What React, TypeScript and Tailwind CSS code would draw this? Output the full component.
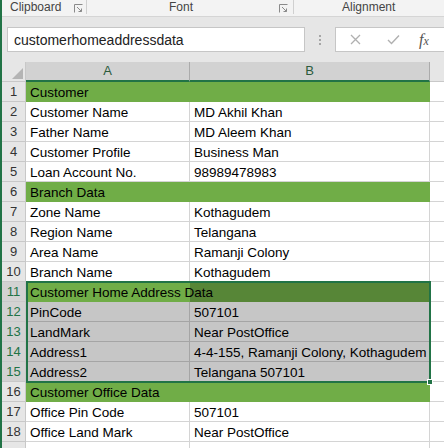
type SheetRow = {
  n: number;
  a?: string;
  b?: string;
  head?: boolean;
  sel?: boolean;
  hideNum?: boolean;
};

const rows: SheetRow[] = [
  { n: 1, a: "Customer", head: true },
  { n: 2, a: "Customer Name", b: "MD Akhil Khan" },
  { n: 3, a: "Father Name", b: "MD Aleem Khan" },
  { n: 4, a: "Customer Profile", b: "Business Man" },
  { n: 5, a: "Loan Account No.", b: "98989478983" },
  { n: 6, a: "Branch Data", head: true },
  { n: 7, a: "Zone Name", b: "Kothagudem" },
  { n: 8, a: "Region Name", b: "Telangana" },
  { n: 9, a: "Area Name", b: "Ramanji Colony" },
  { n: 10, a: "Branch Name", b: "Kothagudem" },
  { n: 11, a: "Customer Home Address Data", head: true, sel: true },
  { n: 12, a: "PinCode", b: "507101", sel: true },
  { n: 13, a: "LandMark", b: "Near PostOffice", sel: true },
  { n: 14, a: "Address1", b: "4-4-155, Ramanji Colony, Kothagudem", sel: true },
  { n: 15, a: "Address2", b: "Telangana 507101", sel: true },
  { n: 16, a: "Customer Office Data", head: true },
  { n: 17, a: "Office Pin Code", b: "507101" },
  { n: 18, a: "Office Land Mark", b: "Near PostOffice" },
  // partly visible row at the bottom edge, number falls below the window
  { n: 19, hideNum: true },
];

function Launcher() {
  return (
    <svg width="9" height="9" viewBox="0 0 9 9" className="text-[#8a8a8a]">
      <path d="M0.5 8.5V0.5H8.5" fill="none" stroke="currentColor" />
      <path d="M3 3L7.5 7.5M7.5 4.5V7.5H4.5" fill="none" stroke="currentColor" />
    </svg>
  );
}

function Row({ row }: { row: SheetRow }) {
  const hdr = row.sel
    ? "bg-[#d2d2d2] text-[#217346]"
    : "bg-[#e6e6e6] text-[#333]";

  let aCls = "border-r border-b border-[#d4d4d4] bg-white";
  let bCls = "border-r border-b border-[#d4d4d4] bg-white";
  if (row.head && row.sel) {
    aCls = "border-b border-[#70ad47] bg-[#70ad47]";
    bCls = "border-r border-b border-[#578637] bg-[#578637]";
  } else if (row.head) {
    aCls = "border-b border-[#70ad47] bg-[#70ad47]";
    bCls = "border-r border-b border-[#70ad47] bg-[#70ad47]";
  } else if (row.sel) {
    aCls = "border-r border-b border-[#a5a5a5] bg-[#c6c6c6]";
    bCls = "border-r border-b border-[#a5a5a5] bg-[#c6c6c6]";
  }

  return (
    <div className="flex h-[20px] text-[13.5px] text-black">
      <div
        className={`w-[24px] shrink-0 border-r border-b border-[#c8c8c8] flex items-center justify-center text-[13px] ${hdr}`}
      >
        {row.hideNum ? null : row.n}
      </div>
      <div className={`w-[164px] shrink-0 flex items-end pl-[4px] leading-[16px] whitespace-nowrap ${aCls}`}>
        <span className="relative z-10">{row.a}</span>
      </div>
      <div className={`w-[240px] shrink-0 flex items-end pl-[4px] leading-[16px] whitespace-nowrap ${bCls}`}>
        {row.b}
      </div>
      <div className="flex-1 border-b border-[#d4d4d4] bg-white" />
    </div>
  );
}

export default function App() {
  return (
    <div className="w-[444px] h-[448px] overflow-hidden bg-[#e6e6e6] border-l-2 border-[#217346] font-['Liberation_Sans',Arial,sans-serif]">
      {/* ribbon group labels */}
      <div className="flex h-[17px] bg-[#f3f3f3] border-b border-[#d5d5d5] text-[12px] leading-[15px] text-[#444]">
        <div className="w-[84px] flex items-start">
          <span className="ml-[8px]">Clipboard</span>
          <span className="ml-[13px] mt-[4px]">
            <Launcher />
          </span>
        </div>
        <div className="w-px h-[14px] bg-[#d0d0d0]" />
        <div className="w-[206px] flex items-start">
          <span className="ml-[82px]">Font</span>
          <span className="ml-[86px] mt-[4px]">
            <Launcher />
          </span>
        </div>
        <div className="w-px h-[14px] bg-[#d0d0d0]" />
        <div className="flex-1">
          <span className="ml-[48px]">Alignment</span>
        </div>
      </div>

      {/* formula bar */}
      <div className="flex h-[45px] pt-[10px]">
        <div className="ml-[5px] w-[298px] h-[25px] bg-white border border-[#c6c6c6] flex items-center pl-[6px] text-[14px] leading-[16px] text-[#222]">
          customerhomeaddressdata
        </div>
        <div className="w-[30px] h-[25px] flex flex-col items-center justify-center gap-[2px]">
          <div className="w-[2px] h-[2px] bg-[#a6a6a6]" />
          <div className="w-[2px] h-[2px] bg-[#a6a6a6]" />
          <div className="w-[2px] h-[2px] bg-[#a6a6a6]" />
        </div>
        <div className="flex-1 h-[25px] bg-white border-y border-l border-[#c6c6c6] flex items-center">
          <svg width="11" height="11" viewBox="0 0 11 11" className="ml-[14px]">
            <path d="M1 1L10 10M10 1L1 10" stroke="#b0b0b0" strokeWidth="1.3" />
          </svg>
          <svg width="13" height="11" viewBox="0 0 13 11" className="ml-[26px]">
            <path d="M1 6L4.5 9.5L12 1.5" fill="none" stroke="#b0b0b0" strokeWidth="1.4" />
          </svg>
          <span className="ml-[19px] font-['Liberation_Serif',serif] italic text-[16px] text-[#555] leading-none">
            f<span className="text-[12px]">x</span>
          </span>
        </div>
      </div>

      {/* column headers */}
      <div className="flex h-[20px] text-[13px]">
        <div className="w-[24px] shrink-0 bg-[#e6e6e6] border-r border-b border-[#c8c8c8] flex items-end justify-end p-[2px]">
          <svg width="11" height="11" viewBox="0 0 11 11">
            <path d="M11 0V11H0Z" fill="#b4b4b4" />
          </svg>
        </div>
        <div className="w-[164px] shrink-0 bg-[#d2d2d2] border-r border-[#ababab] border-b-2 border-b-[#217346] flex items-center justify-center text-[#2c5b3c]">
          A
        </div>
        <div className="w-[240px] shrink-0 bg-[#d2d2d2] border-r border-[#ababab] border-b-2 border-b-[#217346] flex items-center justify-center text-[#2c5b3c]">
          B
        </div>
        <div className="flex-1 bg-[#e6e6e6] border-b border-[#c8c8c8]" />
      </div>

      {/* cells */}
      <div className="relative">
        {rows.map((row) => (
          <Row key={row.n} row={row} />
        ))}
        <div className="absolute left-[24px] top-[199px] w-[405px] h-[102px] border-2 border-[#217346] z-20">
          <div className="absolute right-[-4px] bottom-[-4px] w-[6px] h-[6px] bg-[#217346] border border-white" />
        </div>
      </div>
    </div>
  );
}
